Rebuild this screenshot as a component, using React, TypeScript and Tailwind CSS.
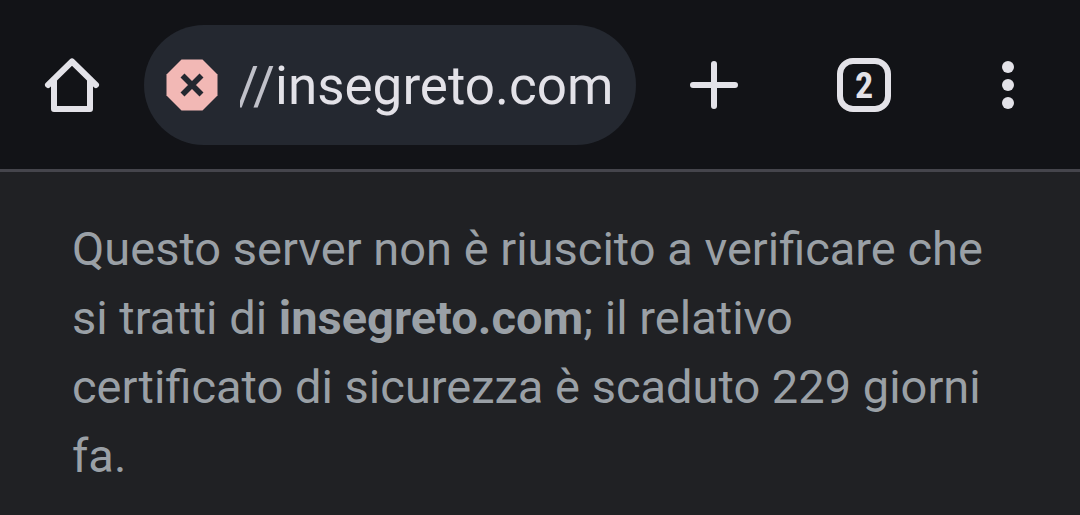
import React, { useState } from 'react';

const App: React.FC = () => {
  const [host, setHost] = useState('insegreto.com');

  return (
    <div className="min-h-screen bg-[#202124] font-['Roboto',sans-serif]">

      {/* Browser toolbar */}
      <header className="flex items-center bg-[#121317] pt-[25px] pb-6 border-b-3 border-[#45454c] text-[#e3e2e8]">
        <button aria-label="Home" className="w-36 h-[120px] flex items-center justify-center shrink-0">
          <svg className="w-[72px] h-[72px]" viewBox="0 0 72 72" fill="none" stroke="currentColor" strokeWidth="6" strokeLinecap="round" strokeLinejoin="round">
            <path d="M12 36 36 12.5l24 23.5" />
            <path d="M18 31v29h36V31" />
          </svg>
        </button>

        <div className="flex-1 min-w-0 h-[120px] flex items-center rounded-full bg-[#242830] pl-3 pr-5">
          <button aria-label="Connessione non sicura" className="w-[72px] h-[72px] shrink-0">
            <svg className="w-full h-full" viewBox="0 0 72 72" fill="none">
              <path d="M25.5 10.5h21l15 15v21l-15 15h-21l-15-15v-21z" fill="#f2b8b5" />
              <path d="m26.5 26.5 19 19m0-19-19 19" stroke="#242830" strokeWidth="5.6" />
            </svg>
          </button>
          <div className="ml-3 flex-1 min-w-0 flex items-center pt-1 text-[53px]">
            <label htmlFor="address" className="w-[35px] flex justify-end shrink-0 overflow-hidden text-[#c0c1c9]">//</label>
            <input
              id="address"
              type="text"
              value={host}
              onChange={(e) => setHost(e.target.value)}
              className="flex-1 min-w-0 bg-transparent outline-none"
            />
          </div>
        </div>

        <button aria-label="Nuova scheda" className="w-[156px] h-[120px] flex items-center justify-center shrink-0">
          <svg className="w-[72px] h-[72px]" viewBox="0 0 72 72" fill="none" stroke="currentColor" strokeWidth="6" strokeLinecap="round">
            <path d="M36 15v42M15 36h42" />
          </svg>
        </button>
        <button aria-label="Schede aperte" className="w-36 h-[120px] flex items-center justify-center shrink-0">
          <span className="w-[54px] h-[54px] flex items-center justify-center rounded-2xl border-6 border-current pt-0.5 text-4xl font-bold font-['Roboto_Condensed','Liberation_Sans_Narrow','Roboto',sans-serif]">2</span>
        </button>
        <button aria-label="Menu" className="w-36 h-[120px] flex items-center justify-center shrink-0">
          <svg className="w-[72px] h-[72px]" viewBox="0 0 72 72" fill="currentColor">
            <circle cx="36" cy="18" r="6" />
            <circle cx="36" cy="36" r="6" />
            <circle cx="36" cy="54" r="6" />
          </svg>
        </button>
      </header>

      {/* Certificate error details */}
      <main className="px-[72px] pt-[42px]">
        <p className="text-[47px] leading-[69px] text-[#9aa0a6]">
          Questo server non è riuscito a verificare che si tratti di <strong>insegreto.com</strong>; il relativo certificato di sicurezza è scaduto 229 giorni fa.
        </p>
      </main>
    </div>
  );
};

export default App;
